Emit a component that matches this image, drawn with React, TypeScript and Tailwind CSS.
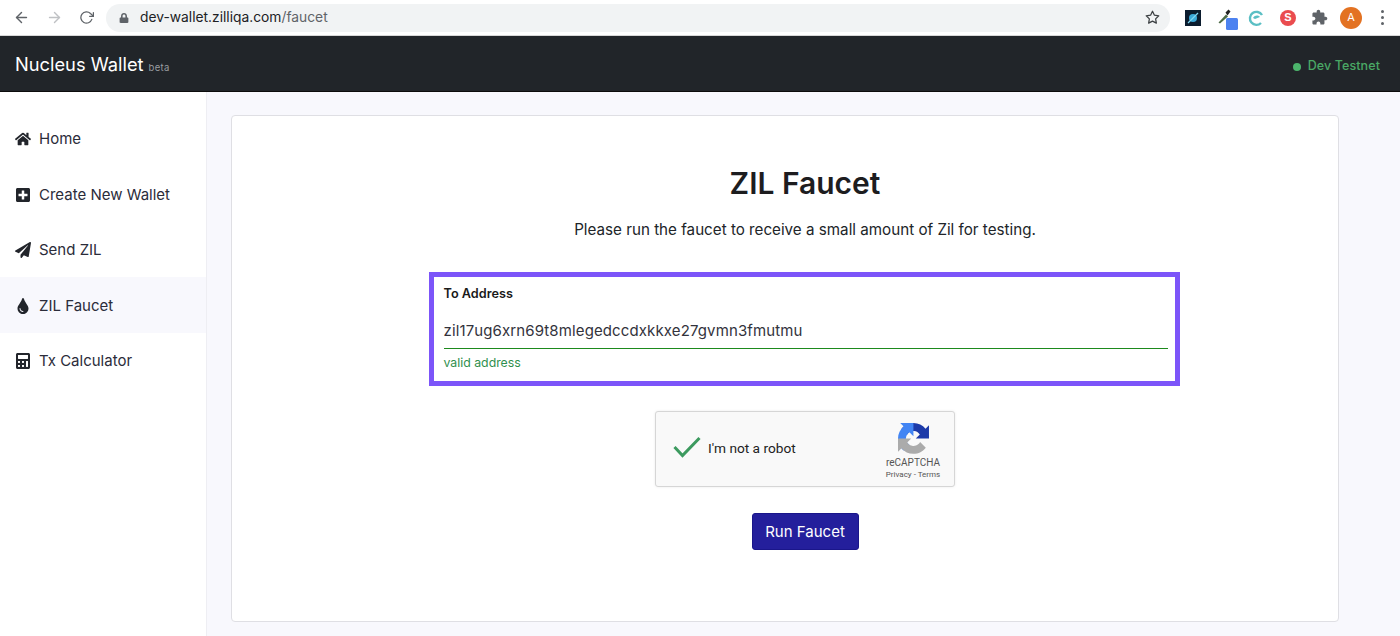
import React from "react";
import { FaHome, FaPlusSquare, FaPaperPlane, FaTint, FaCalculator, FaLock } from "react-icons/fa";
import { FiArrowLeft, FiArrowRight, FiRotateCw, FiStar } from "react-icons/fi";

const nav = [
  { label: "Home", Icon: FaHome },
  { label: "Create New Wallet", Icon: FaPlusSquare },
  { label: "Send ZIL", Icon: FaPaperPlane },
  { label: "ZIL Faucet", Icon: FaTint, active: true },
  { label: "Tx Calculator", Icon: FaCalculator },
];

function ChromeBar() {
  return (
    <div className="h-9 bg-white flex items-center border-b border-[#d8d8d8] shrink-0">
      <div className="flex items-center w-[106px] pl-[13px] gap-[16px] text-[#5f6368]">
        <FiArrowLeft size={17} />
        <FiArrowRight size={17} className="text-[#bfc1c4]" />
        <FiRotateCw size={15} />
      </div>
      <div className="w-[1064px] h-[28px] rounded-full bg-[#f1f3f4] flex items-center pl-[13px] pr-[10px]">
        <FaLock size={10} className="text-[#5f6368]" />
        <span className="ml-[11px] text-[13.8px] text-[#202124]">
          dev-wallet.zilliqa.com<span className="text-[#5f6368]">/faucet</span>
        </span>
        <FiStar size={15} className="ml-auto text-[#3c4043]" />
      </div>
      <div className="flex-1 flex items-center h-full">
        <svg className="ml-[15px]" width="16" height="16" viewBox="0 0 16 16">
          <rect width="16" height="16" fill="#0b1c2e" />
          <circle cx="8" cy="8" r="4" fill="#3aa9d8" />
          <path d="M3 13 L13 3" stroke="#7fd6f2" strokeWidth="1.2" />
        </svg>
        <svg className="ml-[17px] mt-[4px]" width="20" height="22" viewBox="0 0 20 22">
          <path d="M0.5 13.5 L8 5.5 L10 7.5 L2 14.5 Z" fill="#4d6b46" />
          <path d="M7.5 3.5 L10.5 0.5 L12.5 2.5 L9.5 6.5 Z" fill="#222" />
          <rect x="8" y="9" width="12" height="12" rx="1.5" fill="#4c82f0" />
        </svg>
        <svg className="ml-[9px]" width="18" height="18" viewBox="0 0 18 18">
          <path d="M15 6 A6.5 6.5 0 1 0 14 14" fill="none" stroke="#5bbfc4" strokeWidth="2.4" />
          <path d="M6 9 C8 6 11 6 13 8 L8 10 Z" fill="#5bbfc4" />
        </svg>
        <div className="ml-[15px] w-4 h-4 rounded-full bg-[#ea4c4f] text-white text-[11px] font-bold flex items-center justify-center font-['Liberation_Sans',sans-serif]">
          S
        </div>
        <svg className="ml-[15px] text-[#5f6368]" width="17" height="17" viewBox="0 0 24 24" fill="currentColor">
          <path d="M20.5 11H19V7c0-1.1-.9-2-2-2h-4V3.5C13 2.12 11.88 1 10.5 1S8 2.12 8 3.5V5H4c-1.1 0-1.99.9-1.99 2v3.8H3.5c1.49 0 2.7 1.21 2.7 2.7s-1.21 2.7-2.7 2.7H2V20c0 1.1.9 2 2 2h3.8v-1.5c0-1.49 1.21-2.7 2.7-2.7 1.49 0 2.7 1.21 2.7 2.7V22H17c1.1 0 2-.9 2-2v-4h1.5c1.38 0 2.5-1.12 2.5-2.5S21.88 11 20.5 11z" />
        </svg>
        <div className="ml-[12px] w-[22px] h-[22px] rounded-full bg-[#e37222] text-white text-[11px] flex items-center justify-center">
          A
        </div>
        <div className="ml-[19px] flex flex-col gap-[3px]">
          <span className="w-[3px] h-[3px] rounded-full bg-[#5f6368]" />
          <span className="w-[3px] h-[3px] rounded-full bg-[#5f6368]" />
          <span className="w-[3px] h-[3px] rounded-full bg-[#5f6368]" />
        </div>
      </div>
    </div>
  );
}

function Recaptcha() {
  return (
    <div className="w-[300px] h-[76px] bg-[#f9f9f9] border border-[#d6d6d6] rounded-[3px] shadow-[0_0_3px_rgba(0,0,0,0.08)] flex items-center relative font-['Roboto',sans-serif]">
      <svg className="ml-[17px] mb-[4px]" width="28" height="22" viewBox="0 0 28 22">
        <path d="M1.5 11 L9.5 19.5 L26.5 2" fill="none" stroke="#3c9a5f" strokeWidth="3" />
      </svg>
      <span className="ml-[7px] mb-[2px] text-[13.7px] text-[#222]">I'm not a robot</span>
      <div className="absolute right-[12px] top-[11px] w-[58px] flex flex-col items-center">
        <svg width="31" height="31" viewBox="0 0 64 64">
          <path d="M64 31.955l-.033-1.37V4.687l-7.16 7.16C50.948 4.674 42.033.093 32.05.093c-10.4 0-19.622 4.96-25.458 12.64l11.736 11.86a15.55 15.55 0 0 1 4.754-5.334c2.05-1.6 4.952-2.906 8.968-2.906.485 0 .86.057 1.135.163 4.976.393 9.288 3.14 11.828 7.124l-8.307 8.307 32.295.004" fill="#1c3aa9" />
          <path d="M31.862.094l-1.37.033H4.594l7.16 7.16C4.58 13.147 0 22.06 0 32.046c0 10.4 4.96 19.622 12.64 25.458l11.86-11.736a15.55 15.55 0 0 1-5.334-4.754c-1.6-2.05-2.906-4.952-2.906-8.968 0-.485.057-.86.163-1.135.393-4.976 3.14-9.288 7.124-11.828l8.307 8.307.004-32.295" fill="#4285f4" />
          <path d="M.002 31.862l.033 1.37v25.9l7.16-7.16c5.86 7.173 14.774 11.754 24.76 11.754 10.4 0 19.622-4.96 25.458-12.64L45.68 39.226c-1.15 2.127-2.784 3.95-4.754 5.334-2.05 1.6-4.952 2.906-8.968 2.906-.485 0-.86-.057-1.135-.163-4.976-.393-9.288-3.14-11.828-7.124l8.307-8.307-32.295-.01" fill="#ababab" />
        </svg>
        <span className="text-[10px] leading-[12px] text-[#555] mt-[3px]">reCAPTCHA</span>
        <span className="text-[8px] leading-[10px] text-[#555] mt-[1px] whitespace-nowrap">Privacy - Terms</span>
      </div>
    </div>
  );
}

export default function App() {
  return (
    <div className="w-[1400px] h-[636px] overflow-hidden flex flex-col bg-white font-['Inter',sans-serif]">
      <ChromeBar />
      <header className="h-[56px] shrink-0 bg-[#212529] border-b border-[#0c0c0c] flex items-center justify-between pl-[15px] pr-[20px]">
        <div className="flex items-baseline mt-[2px]">
          <span className="text-[18.3px] text-white">Nucleus Wallet</span>
          <span className="ml-[5px] text-[9.5px] tracking-[0.3px] text-[#9a9da0]">beta</span>
        </div>
        <div className="flex items-center text-[#4aa865] text-[12.5px] font-medium tracking-[0.1px] mt-[5px]">
          <span className="w-2 h-2 rounded-full bg-[#4cb56c] mr-[7px] mt-[2px]" />
          Dev Testnet
        </div>
      </header>
      <div className="flex-1 flex min-h-0">
        <aside className="w-[207px] shrink-0 bg-white border-r border-[#eeeef3] pt-[18.5px]">
          {nav.map(({ label, Icon, active }) => (
            <div
              key={label}
              className={`h-[55.5px] flex items-center pl-[15px] pt-[2px] text-[15px] text-[#2b2c3a] ${active ? "bg-[#f8f8fd]" : ""}`}
            >
              <span className="w-[24px] flex items-center text-[#22252b]">
                <Icon size={16} />
              </span>
              {label}
            </div>
          ))}
        </aside>
        <main className="flex-1 bg-[#f8f8fd] pl-[24px] pr-[61px] pt-[23px] pb-[14px]">
          <div className="h-full bg-white border border-[#dfdfe4] rounded-[4px] flex flex-col items-center pt-[47px] pl-[40px]">
            <h1 className="text-[30px] leading-[40px] font-semibold text-[#1d1d1f]">ZIL Faucet</h1>
            <p className="mt-[15px] text-[15.2px] leading-[24px] text-[#212529]">
              Please run the faucet to receive a small amount of Zil for testing.
            </p>
            <div className="mt-[30px] -ml-[2px] w-[751px] h-[114px] border-[5px] border-[#7c55f9] pl-[10px] pr-[7px] pt-[9px] bg-white">
              <div className="text-[12.7px] leading-[15px] font-semibold text-[#1a1a1a]">To Address</div>
              <div className="mt-[15px] h-[33px] pt-[3px] border-b border-[#1d8a1d] text-[15px] leading-[24px] tracking-[0.12px] text-[#33333c]">
                zil17ug6xrn69t8mlegedccdxkkxe27gvmn3fmutmu
              </div>
              <div className="mt-[6px] text-[12.3px] leading-[15px] text-[#2f8f4e]">valid address</div>
            </div>
            <div className="mt-[25px]">
              <Recaptcha />
            </div>
            <button className="mt-[26px] w-[107px] h-[37px] pt-[1px] bg-[#241f9c] border border-[#1a168a] rounded-[3px] text-white text-[15px]">
              Run Faucet
            </button>
          </div>
        </main>
      </div>
    </div>
  );
}
